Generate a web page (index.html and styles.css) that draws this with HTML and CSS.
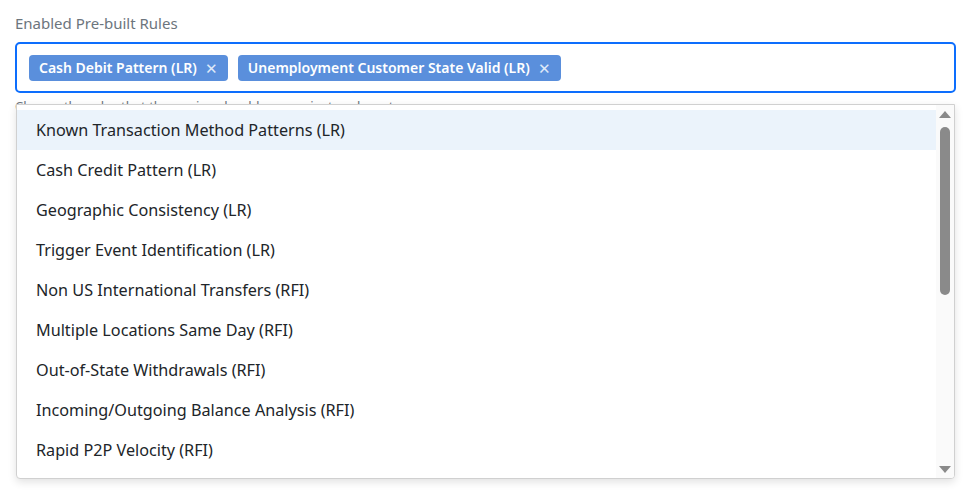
FILE: index.html
```html
<!DOCTYPE html>
<html lang="en">
<head>
  <meta charset="UTF-8">
  <meta name="viewport" content="width=device-width, initial-scale=1.0">
  <title>Pre-built Rules</title>
  <link rel="stylesheet" href="styles.css">
</head>
<body>
  <div class="field">
    <label class="field-label">Enabled Pre-built Rules</label>
    <div class="select-box">
      <span class="tag">Cash Debit Pattern (LR) <span class="tag-x">&#x2715;</span></span>
      <span class="tag">Unemployment Customer State Valid (LR) <span class="tag-x">&#x2715;</span></span>
    </div>
    <div class="help">Choose the rules that the engine should run against each customer.</div>

    <!-- open options menu -->
    <div class="menu">
      <ul class="options">
        <li class="option active">Known Transaction Method Patterns (LR)</li>
        <li class="option">Cash Credit Pattern (LR)</li>
        <li class="option">Geographic Consistency (LR)</li>
        <li class="option">Trigger Event Identification (LR)</li>
        <li class="option">Non US International Transfers (RFI)</li>
        <li class="option">Multiple Locations Same Day (RFI)</li>
        <li class="option">Out-of-State Withdrawals (RFI)</li>
        <li class="option">Incoming/Outgoing Balance Analysis (RFI)</li>
        <li class="option">Rapid P2P Velocity (RFI)</li>
      </ul>
      <div class="scrollbar">
        <span class="arrow up"></span>
        <div class="track"><div class="thumb"></div></div>
        <span class="arrow down"></span>
      </div>
    </div>
  </div>
</body>
</html>
```

FILE: styles.css
```css
html,
body {
  height: 100%;
}

body {
  margin: 0;
  font-family: "Noto Sans", "Open Sans", sans-serif;
  background-color: #ffffff;
  color: #212529;
}

.field {
  position: relative;
  min-height: 100%;
  box-sizing: border-box;
  padding: 12px 20px 0 15px;
}

.field-label {
  display: block;
  font-size: 15px;
  color: #6c757d;
  line-height: 22px;
  margin-bottom: 8px;
}

.select-box {
  display: flex;
  align-items: center;
  gap: 10px;
  height: 47px;
  padding: 0 12px;
  border: 2px solid #0d6efd;
  border-radius: 5px;
}

.tag {
  display: inline-flex;
  align-items: center;
  gap: 8px;
  height: 26px;
  padding: 0 10px;
  background-color: #5a8fdc;
  color: #ffffff;
  font-size: 14px;
  font-weight: 600;
  border-radius: 4px;
}

.tag-x {
  font-size: 15px;
  font-weight: 400;
  color: #dfe9f8;
}

.help {
  font-size: 13px;
  color: #6c757d;
  margin-top: 4px;
  line-height: 18px;
}

/* dropdown sits over the help text */
.menu {
  position: absolute;
  top: 104px;
  left: 16px;
  right: 21px;
  height: 373px;
  display: flex;
  background: #ffffff;
  border: 1px solid #d0d0d0;
  border-radius: 0 0 4px 4px;
  box-shadow: 0 3px 8px rgba(0, 0, 0, 0.12);
  overflow: hidden;
}

.options {
  flex: 1;
  list-style: none;
  margin: 0;
  padding: 5px 0 0;
  overflow: hidden;
}

.option {
  height: 40px;
  line-height: 40px;
  padding-left: 19px;
  font-size: 16.2px;
}

.option.active {
  background-color: #ebf3fb;
}

.scrollbar {
  width: 18px;
  display: flex;
  flex-direction: column;
  align-items: center;
  background-color: #fafafa;
  padding: 6px 0 5px;
}

.arrow {
  width: 0;
  height: 0;
  border-left: 6px solid transparent;
  border-right: 6px solid transparent;
}

.arrow.up {
  border-bottom: 7px solid #8a8a8a;
}

.arrow.down {
  border-top: 7px solid #8a8a8a;
}

.track {
  flex: 1;
  width: 100%;
  display: flex;
  justify-content: center;
  padding-top: 9px;
}

.thumb {
  width: 10px;
  height: 168px;
  background-color: #8a8a8a;
  border-radius: 5px;
}
```
